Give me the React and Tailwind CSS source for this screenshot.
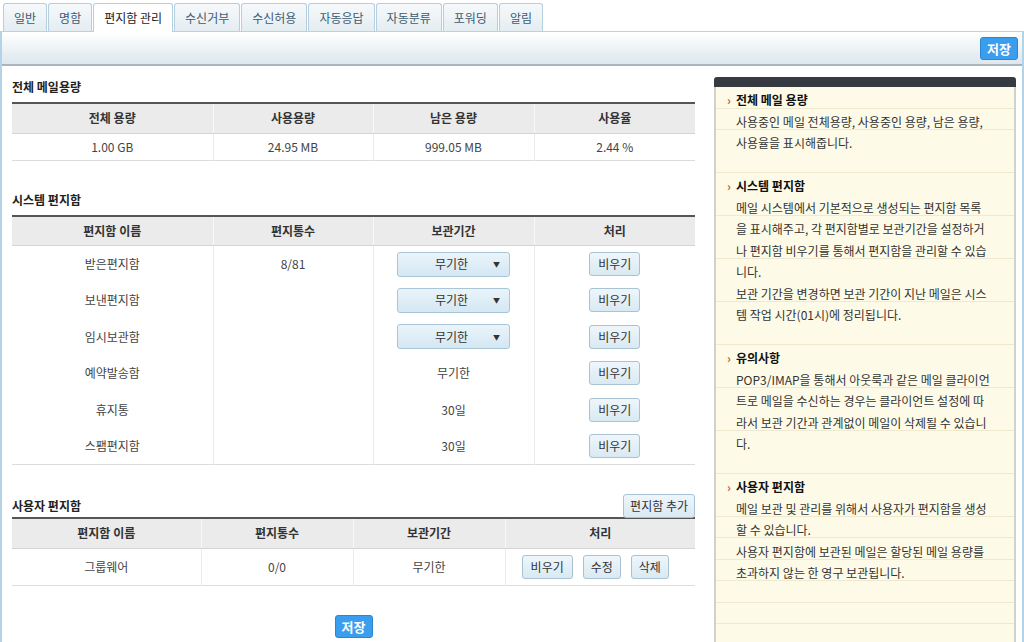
import { useState } from "react";

const tabs = ["일반", "명함", "편지함 관리", "수신거부", "수신허용", "자동응답", "자동분류", "포워딩", "알림"];

const systemBoxes = [
    { name: "받은편지함", count: "8/81", keep: "무기한", select: true },
    { name: "보낸편지함", count: "", keep: "무기한", select: true },
    { name: "임시보관함", count: "", keep: "무기한", select: true },
    { name: "예약발송함", count: "", keep: "무기한", select: false },
    { name: "휴지통", count: "", keep: "30일", select: false },
    { name: "스팸편지함", count: "", keep: "30일", select: false },
];

const help = [
    {
        title: "전체 메일 용량",
        lines: ["사용중인 메일 전체용량, 사용중인 용량, 남은 용량,", "사용율을 표시해줍니다."],
    },
    {
        title: "시스템 편지함",
        lines: [
            "메일 시스템에서 기본적으로 생성되는 편지함 목록",
            "을 표시해주고, 각 편지함별로 보관기간을 설정하거",
            "나 편지함 비우기를 통해서 편지함을 관리할 수 있습",
            "니다.",
            "보관 기간을 변경하면 보관 기간이 지난 메일은 시스",
            "템 작업 시간(01시)에 정리됩니다.",
        ],
    },
    {
        title: "유의사항",
        lines: [
            "POP3/IMAP을 통해서 아웃룩과 같은 메일 클라이언",
            "트로 메일을 수신하는 경우는 클라이언트 설정에 따",
            "라서 보관 기간과 관계없이 메일이 삭제될 수 있습니",
            "다.",
        ],
    },
    {
        title: "사용자 편지함",
        lines: [
            "메일 보관 및 관리를 위해서 사용자가 편지함을 생성",
            "할 수 있습니다.",
            "사용자 편지함에 보관된 메일은 할당된 메일 용량를",
            "초과하지 않는 한 영구 보관됩니다.",
        ],
    },
];

function LightButton({ children, className = "" }) {
    return (
        <button className={`h-[24px] rounded-[3px] border border-[#a9c3d3] bg-gradient-to-b from-[#eef6fb] to-[#d9e9f3] text-[12px] leading-none text-[#333] ${className}`}>
            {children}
        </button>
    );
}

function SaveButton() {
    return (
        <button className="h-[23px] w-[38px] rounded-[3px] border border-[#2a86d0] bg-[#3b9ded] text-[13px] font-bold leading-none text-white">
            저장
        </button>
    );
}

function KeepSelect({ value }) {
    return (
        <div className="mx-auto flex h-[25px] w-[113px] items-center rounded-[3px] border border-[#a9c6d8] bg-gradient-to-b from-[#eaf4fa] to-[#d4e7f2] pl-[12px] pr-[9px] text-[12px] text-[#333]">
            <span className="flex-1 text-center">{value}</span>
            <span className="text-[7px] text-[#333]">▼</span>
        </div>
    );
}

function HeadCell({ children, first }) {
    return (
        <th className={`h-[30px] bg-[#ebebeb] border-b border-[#d4d4d4] text-[12px] font-bold text-[#333] ${first ? "" : "border-l border-l-[#f8f8f8]"}`}>
            {children}
        </th>
    );
}

export default function App() {
    const [active, setActive] = useState(2);

    return (
        <div className="w-[1024px] h-[642px] overflow-hidden bg-white font-['Noto_Sans_CJK_KR','Noto_Sans',sans-serif] text-[12px] text-[#444]">
            {/* tabs */}
            <div className="flex h-[31px] items-end gap-[1px] pl-[3px]">
                {tabs.map((t, i) => (
                    <button
                        key={t}
                        onClick={() => setActive(i)}
                        className={
                            i === active
                                ? "relative z-10 -mb-[1px] h-[29px] rounded-t-[3px] border border-b-0 border-[#b5cfdd] bg-white px-[10px] text-[12px] text-[#222]"
                                : "h-[28px] rounded-t-[3px] border border-b-0 border-[#b5cfdd] bg-gradient-to-b from-[#f6f9fb] to-[#e4edf2] px-[10px] text-[12px] text-[#3d5b70]"
                        }
                    >
                        {t}
                    </button>
                ))}
            </div>

            <div className="h-[611px] border-l-[2px] border-r-[2px] border-t border-[#b3d4e6]">
                {/* toolbar */}
                <div className="flex h-[34px] items-center justify-end border-b-[2px] border-[#aab6bd] bg-gradient-to-b from-[#ffffff] to-[#dde7ed] pr-[4px]">
                    <SaveButton />
                </div>

                <div className="flex pl-[10px]">
                    {/* left column */}
                    <div className="w-[683px]">
                        <h3 className="mt-[12px] h-[18px] text-[12px] font-bold leading-[18px] text-[#222]">전체 메일용량</h3>
                        <table className="mt-[6px] w-full table-fixed border-collapse border-t-[2px] border-[#555] text-center">
                            <colgroup>
                                <col className="w-[201px]" />
                                <col className="w-[160px]" />
                                <col className="w-[161px]" />
                                <col className="w-[161px]" />
                            </colgroup>
                            <thead>
                                <tr>
                                    <HeadCell first>전체 용량</HeadCell>
                                    <HeadCell>사용용량</HeadCell>
                                    <HeadCell>남은 용량</HeadCell>
                                    <HeadCell>사용율</HeadCell>
                                </tr>
                            </thead>
                            <tbody>
                                <tr className="h-[27px] border-b border-[#dcdcdc]">
                                    <td>1.00 GB</td>
                                    <td className="border-l border-[#ececec]">24.95 MB</td>
                                    <td className="border-l border-[#ececec]">999.05 MB</td>
                                    <td className="border-l border-[#ececec]">2.44 %</td>
                                </tr>
                            </tbody>
                        </table>

                        <h3 className="mt-[30px] h-[18px] text-[12px] font-bold leading-[18px] text-[#222]">시스템 편지함</h3>
                        <table className="mt-[6px] w-full table-fixed border-collapse border-t-[2px] border-[#555] text-center">
                            <colgroup>
                                <col className="w-[201px]" />
                                <col className="w-[160px]" />
                                <col className="w-[161px]" />
                                <col className="w-[161px]" />
                            </colgroup>
                            <thead>
                                <tr>
                                    <HeadCell first>편지함 이름</HeadCell>
                                    <HeadCell>편지통수</HeadCell>
                                    <HeadCell>보관기간</HeadCell>
                                    <HeadCell>처리</HeadCell>
                                </tr>
                            </thead>
                            <tbody className="border-b border-[#dcdcdc]">
                                {systemBoxes.map((b) => (
                                    <tr key={b.name} className="h-[36.5px]">
                                        <td>{b.name}</td>
                                        <td className="border-l border-[#ececec]">{b.count}</td>
                                        <td className="border-l border-[#ececec]">
                                            {b.select ? <KeepSelect value={b.keep} /> : b.keep}
                                        </td>
                                        <td className="border-l border-[#ececec]">
                                            <LightButton className="px-[8px]">비우기</LightButton>
                                        </td>
                                    </tr>
                                ))}
                            </tbody>
                        </table>

                        <div className="mt-[29px] flex h-[23px] items-center justify-between">
                            <h3 className="text-[12px] font-bold leading-[18px] text-[#222]">사용자 편지함</h3>
                            <LightButton className="h-[23px] px-[6px]">편지함 추가</LightButton>
                        </div>
                        <table className="w-full table-fixed border-collapse border-t-[2px] border-[#555] text-center">
                            <colgroup>
                                <col className="w-[189px]" />
                                <col className="w-[152px]" />
                                <col className="w-[152px]" />
                                <col className="w-[190px]" />
                            </colgroup>
                            <thead>
                                <tr>
                                    <HeadCell first>편지함 이름</HeadCell>
                                    <HeadCell>편지통수</HeadCell>
                                    <HeadCell>보관기간</HeadCell>
                                    <HeadCell>처리</HeadCell>
                                </tr>
                            </thead>
                            <tbody>
                                <tr className="h-[37px] border-b border-[#dcdcdc]">
                                    <td>그룹웨어</td>
                                    <td className="border-l border-[#ececec]">0/0</td>
                                    <td className="border-l border-[#ececec]">무기한</td>
                                    <td className="border-l border-[#ececec]">
                                        <div className="flex justify-center gap-[10px] pr-[10px]">
                                            <LightButton className="px-[8px]">비우기</LightButton>
                                            <LightButton className="px-[7px]">수정</LightButton>
                                            <LightButton className="px-[7px]">삭제</LightButton>
                                        </div>
                                    </td>
                                </tr>
                            </tbody>
                        </table>

                        <div className="mt-[29px] flex justify-center">
                            <SaveButton />
                        </div>
                    </div>

                    {/* help panel */}
                    <div className="ml-[19px] mt-[11px] w-[302px]">
                        <div className="h-[10px] rounded-t-[3px] bg-[#363b41]" />
                        <div className="h-[600px] border-l-[2px] border-r-[2px] border-[#d2d2cc] bg-[#fdfbe8] bg-[repeating-linear-gradient(to_bottom,transparent_0,transparent_20.5px,#efe9cf_20.5px,#efe9cf_21.5px)] pt-[2px] pl-[20px] leading-[21.5px] text-[12px] text-[#333]">
                            {help.map((s) => (
                                <div key={s.title} className="mb-[21.5px]">
                                    <div className="relative font-bold text-[#111]">
                                        <span className="absolute -left-[9px] top-0 font-bold text-[#d0552f]">›</span>
                                        {s.title}
                                    </div>
                                    {s.lines.map((l) => (
                                        <div key={l} className="whitespace-nowrap">{l}</div>
                                    ))}
                                </div>
                            ))}
                        </div>
                    </div>
                </div>
            </div>
        </div>
    );
}
